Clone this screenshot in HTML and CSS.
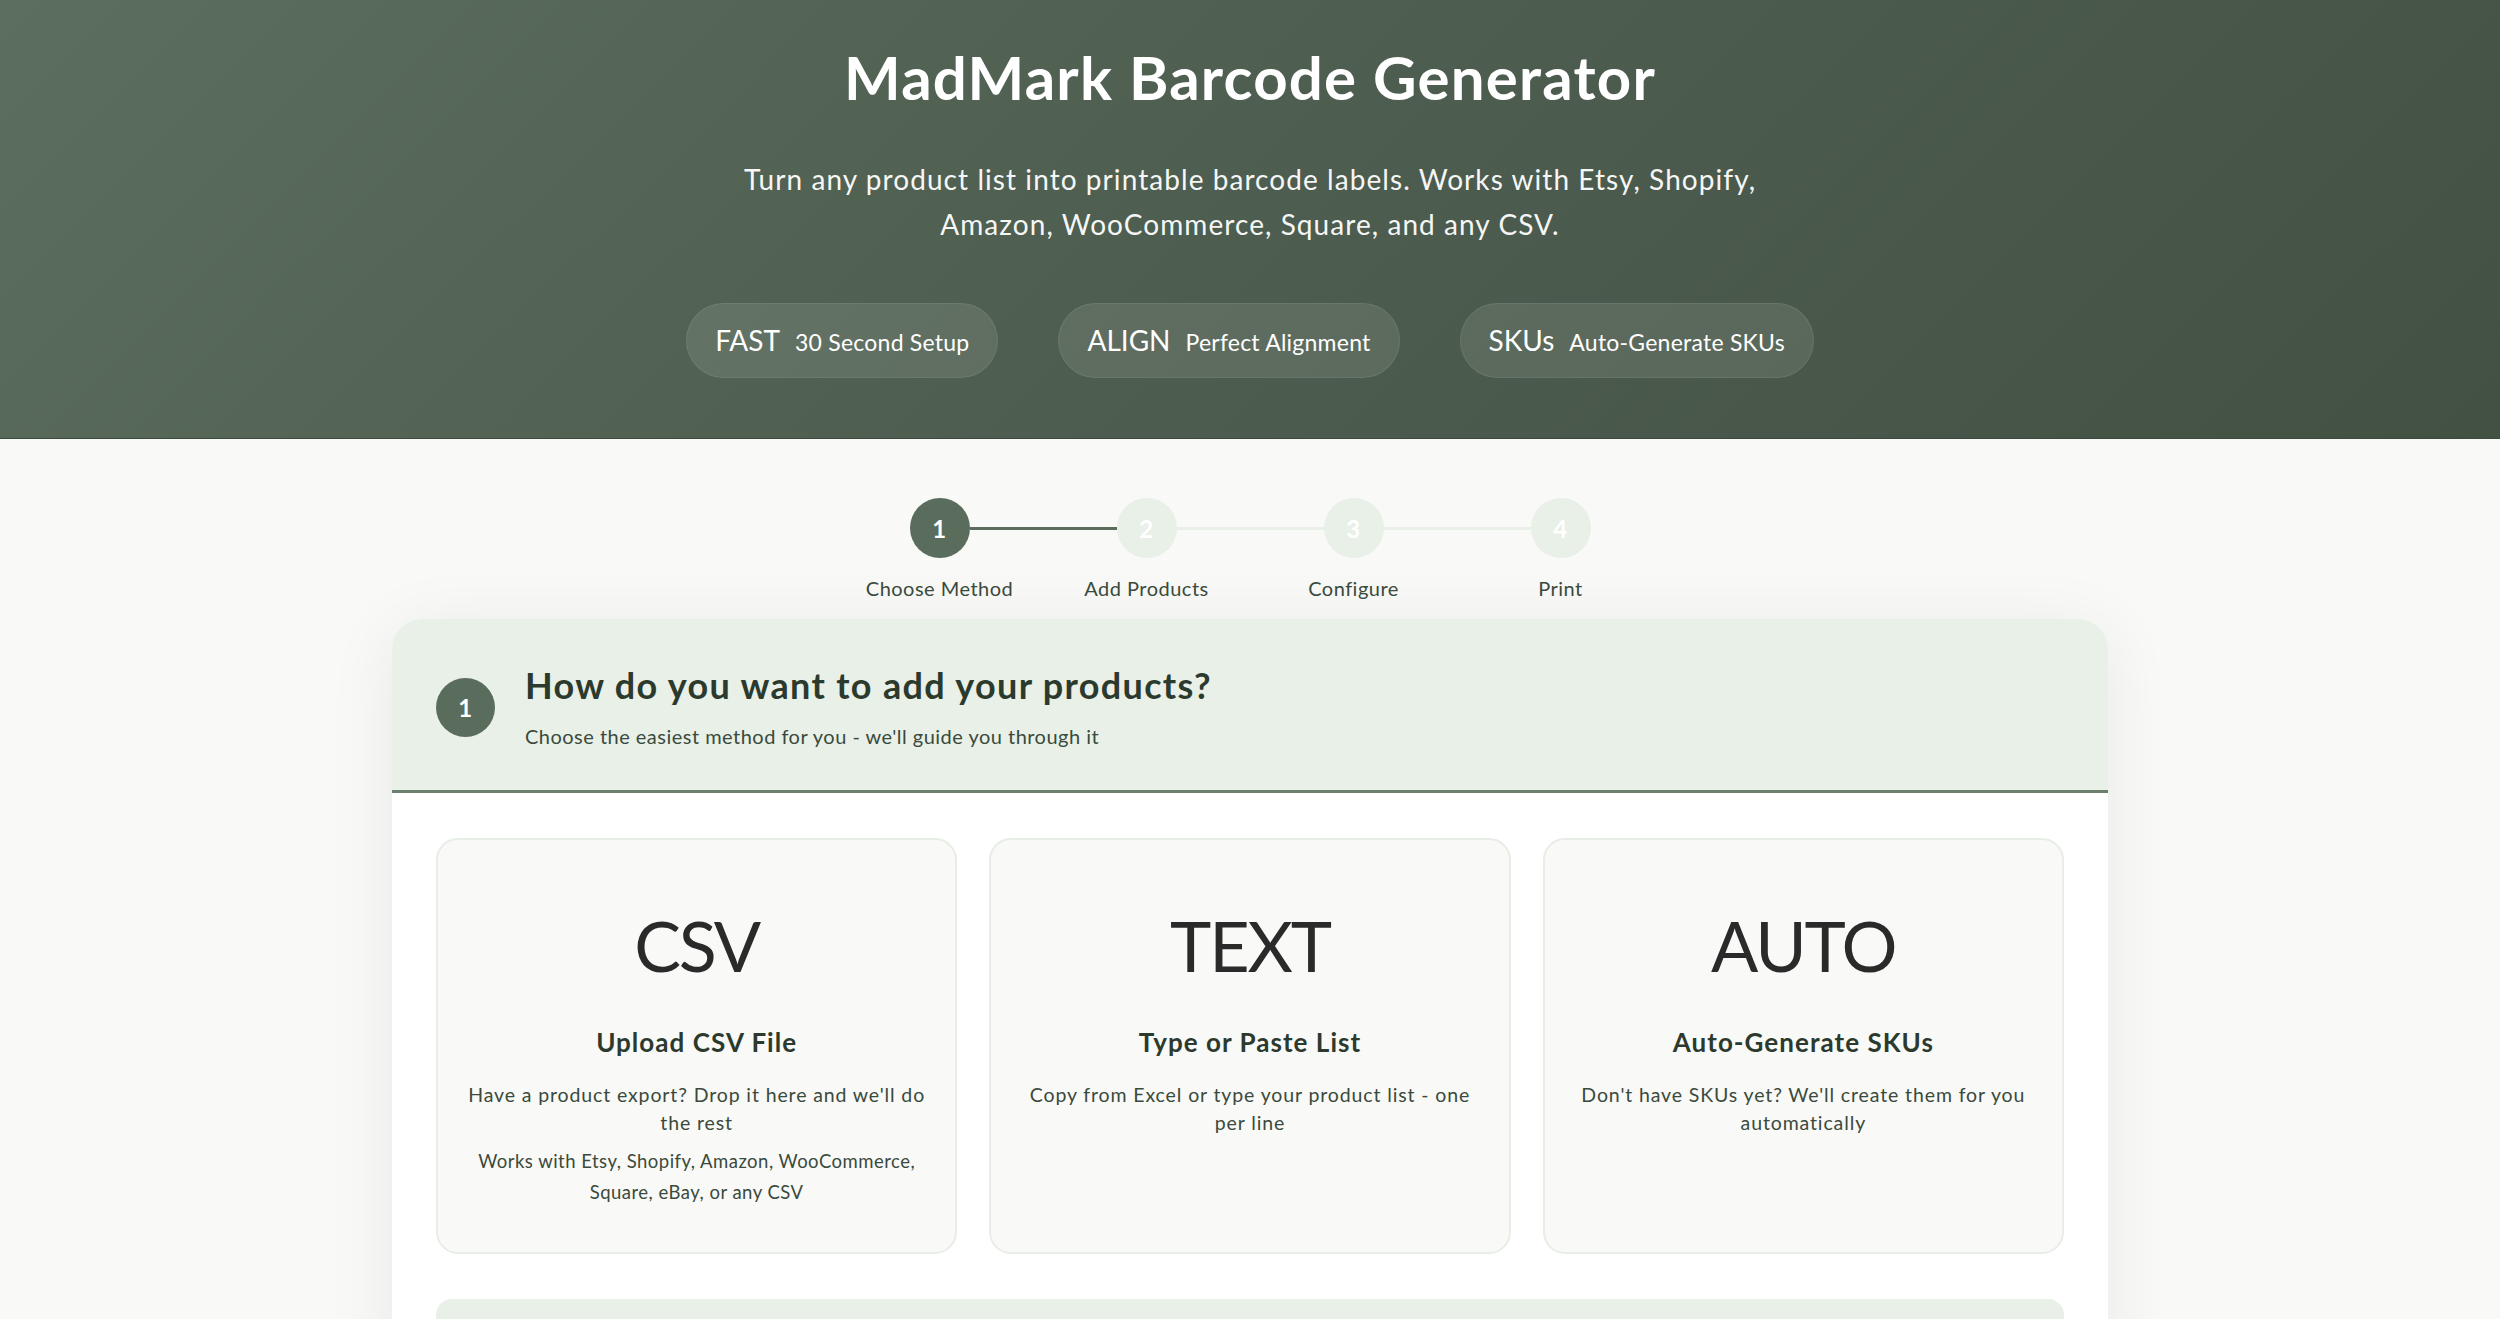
FILE: index.html
```html
<!DOCTYPE html>
<html lang="en">
<head>
  <meta charset="UTF-8">
  <meta name="viewport" content="width=device-width, initial-scale=1.0">
  <title>MadMark Barcode Generator</title>
  <link rel="stylesheet" href="styles.css">
</head>
<body>
  <header class="hero">
    <h1>MadMark Barcode Generator</h1>
    <p class="hero-sub">Turn any product list into printable barcode labels. Works with Etsy, Shopify, Amazon, WooCommerce, Square, and any CSV.</p>
    <div class="badges">
      <div class="badge"><strong>FAST</strong><span>30 Second Setup</span></div>
      <div class="badge"><strong>ALIGN</strong><span>Perfect Alignment</span></div>
      <div class="badge"><strong>SKUs</strong><span>Auto-Generate SKUs</span></div>
    </div>
  </header>

  <nav class="stepper">
    <div class="step active">
      <div class="step-dot">1</div>
      <div class="step-label">Choose Method</div>
    </div>
    <div class="step-line done"></div>
    <div class="step">
      <div class="step-dot">2</div>
      <div class="step-label">Add Products</div>
    </div>
    <div class="step-line"></div>
    <div class="step">
      <div class="step-dot">3</div>
      <div class="step-label">Configure</div>
    </div>
    <div class="step-line"></div>
    <div class="step">
      <div class="step-dot">4</div>
      <div class="step-label">Print</div>
    </div>
  </nav>

  <main class="panel">
    <div class="panel-head">
      <div class="panel-num">1</div>
      <div>
        <h2>How do you want to add your products?</h2>
        <p>Choose the easiest method for you - we'll guide you through it</p>
      </div>
    </div>

    <div class="panel-body">
      <div class="methods">
        <div class="method">
          <div class="method-icon">CSV</div>
          <h3>Upload CSV File</h3>
          <p class="method-desc">Have a product export? Drop it here and we'll do the rest</p>
          <p class="method-note">Works with Etsy, Shopify, Amazon, WooCommerce, Square, eBay, or any CSV</p>
        </div>
        <div class="method">
          <div class="method-icon">TEXT</div>
          <h3>Type or Paste List</h3>
          <p class="method-desc">Copy from Excel or type your product list - one per line</p>
        </div>
        <div class="method">
          <div class="method-icon">AUTO</div>
          <h3>Auto-Generate SKUs</h3>
          <p class="method-desc">Don't have SKUs yet? We'll create them for you automatically</p>
        </div>
      </div>

      <!-- next section starts below the fold -->
      <div class="tip"></div>
    </div>
  </main>
</body>
</html>
```

FILE: styles.css
```css
body {
  font-family: Lato, "Open Sans", sans-serif;
  letter-spacing: 0.03em;
  margin: 0;
  padding: 0 0 60px;
  background-color: #f9f9f7;
  color: #2c3a2e;
}

.hero {
  background: linear-gradient(135deg, #5c6e5d 0%, #4d5d4f 50%, #435143 100%);
  color: white;
  text-align: center;
  padding: 41px 20px 60px;
  border-bottom: 1px solid #3b483c;
}

.hero h1 {
  margin: 0;
  font-size: 60px;
  line-height: 1.2;
  font-weight: 700;
  letter-spacing: 0.02em;
}

.hero-sub {
  max-width: 1040px;
  margin: 44px auto 0;
  font-size: 28px;
  line-height: 1.6;
  letter-spacing: 0.038em;
  opacity: 0.95;
}

.badges {
  display: flex;
  justify-content: center;
  gap: 60px;
  margin-top: 56px;
}

.badge {
  display: flex;
  align-items: baseline;
  gap: 15px;
  padding: 20px 28px;
  border-radius: 40px;
  background-color: rgba(255, 255, 255, 0.1);
  border: 1px solid rgba(255, 255, 255, 0.08);
  line-height: 1.2;
}

.badge strong {
  font-size: 28px;
  font-weight: 400;
  letter-spacing: 0;
}

.badge span {
  font-size: 23px;
  letter-spacing: 0.01em;
}

/* progress steps */
.stepper {
  display: flex;
  justify-content: center;
  align-items: flex-start;
  padding: 59px 0 17px;
}

.step {
  width: 60px;
  display: flex;
  flex-direction: column;
  align-items: center;
}

.step-dot {
  width: 60px;
  height: 60px;
  border-radius: 50%;
  background-color: #e8f0e8;
  color: white;
  font-size: 24px;
  font-weight: 700;
  display: flex;
  align-items: center;
  justify-content: center;
}

.step.active .step-dot {
  background-color: #5a6c5b;
}

.step-label {
  margin-top: 16px;
  font-size: 20px;
  line-height: 1.4;
  white-space: nowrap;
  color: #3a4a3c;
}

.step-line {
  width: 147px;
  height: 3px;
  margin-top: 29px;
  background-color: #e8f0e8;
}

.step-line.done {
  background-color: #5a6c5b;
}

/* main card */
.panel {
  width: 1716px;
  margin: 0 auto;
  background-color: white;
  border-radius: 30px;
  overflow: hidden;
  box-shadow: 0 10px 70px rgba(0, 0, 0, 0.07);
}

.panel-head {
  display: flex;
  align-items: center;
  gap: 30px;
  padding: 45px 44px 40px;
  background-color: #e8f0e8;
  border-bottom: 3px solid #6b7f6d;
}

.panel-num {
  width: 59px;
  height: 59px;
  flex-shrink: 0;
  border-radius: 50%;
  background-color: #5a6c5b;
  color: white;
  font-size: 24px;
  font-weight: 700;
  display: flex;
  align-items: center;
  justify-content: center;
}

.panel-head h2 {
  margin: 0;
  font-size: 36px;
  line-height: 1.2;
  letter-spacing: 0.037em;
  color: #2c3a2e;
}

.panel-head p {
  margin: 15px 0 0;
  font-size: 20px;
  line-height: 1.4;
  color: #3a4a3c;
}

.panel-body {
  padding: 45px 44px 44px;
}

.methods {
  display: grid;
  grid-template-columns: repeat(3, 1fr);
  gap: 32px;
}

.method {
  background-color: #f9f9f7;
  border: 2px solid #e6eee6;
  border-radius: 22px;
  padding: 63px 28px 44px;
  text-align: center;
}

.method-icon {
  font-size: 70px;
  line-height: 1.2;
  letter-spacing: -0.03em;
  color: #2a2a2a;
}

.method h3 {
  margin: 39px 0 0;
  font-size: 26px;
  line-height: 1.3;
  letter-spacing: 0.04em;
  color: #2c3a2e;
}

.method-desc {
  margin: 21px 0 0;
  font-size: 19.5px;
  line-height: 1.42;
  letter-spacing: 0.045em;
  color: #3a4a3c;
}

.method-note {
  margin: 9px 0 0;
  font-size: 18.5px;
  line-height: 1.7;
  color: #3a4a3c;
}

.tip {
  margin-top: 45px;
  min-height: 160px;
  background-color: #e8f0e8;
  border-radius: 16px;
}
```
